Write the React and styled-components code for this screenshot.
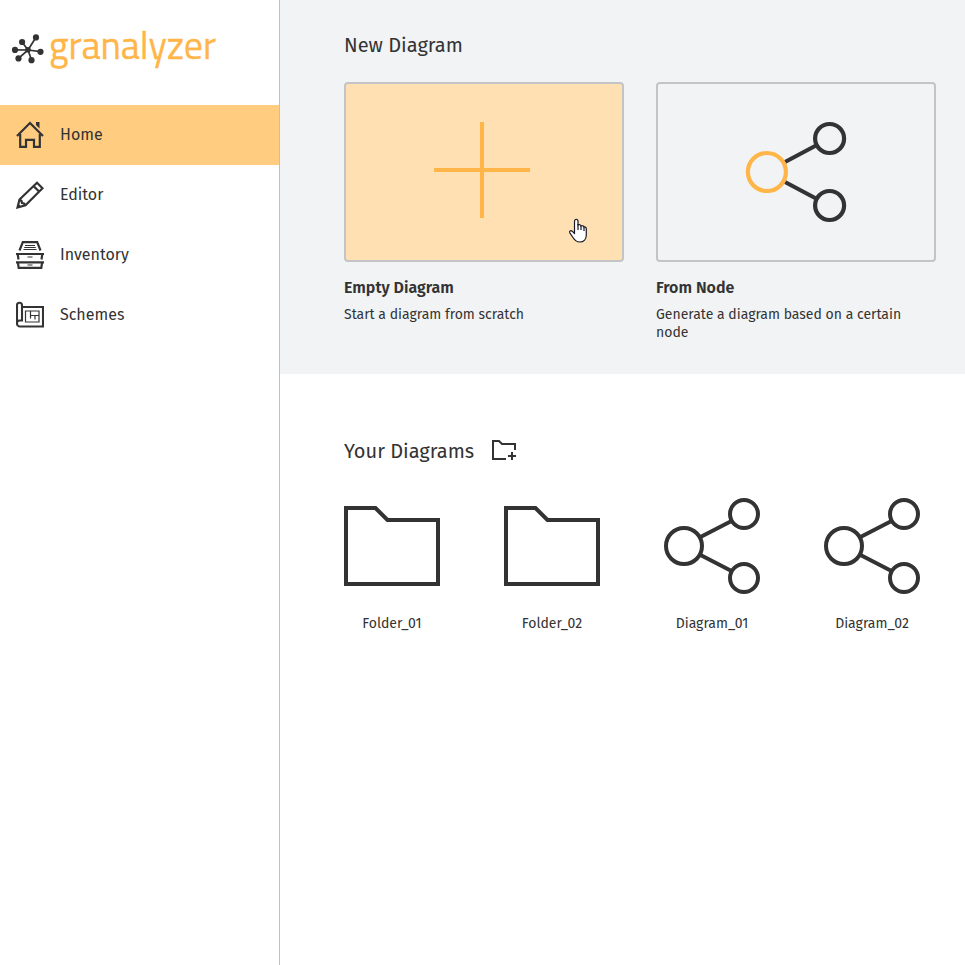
import React from "react";
import styled, { createGlobalStyle } from "styled-components";

const INK = "#333333";
const ORANGE = "#ffb547";

const GlobalStyle = createGlobalStyle`
  *, *::before, *::after { box-sizing: border-box; }
  html, body { margin: 0; padding: 0; overflow: hidden; }
  body { background: #fff; color: ${INK}; font-family: "Fira Sans", "Noto Sans", sans-serif; }
  svg { display: block; flex: none; }
`;

const Page = styled.div`
  display: flex;
  height: 100vh;
  width: 100%;
`;

const Sidebar = styled.aside`
  flex: none;
  width: 280px;
  border-right: 1px solid #bfc0c1;
`;

const Brand = styled.div`
  display: flex;
  align-items: flex-start;
  height: 105px;
  padding: 22px 0 0 11px;
  svg { margin-top: 11px; }
`;

const BrandName = styled.span`
  margin-left: 4px;
  color: ${ORANGE};
  font: 400 38px/46px "Titillium Web", "Noto Sans", sans-serif;
  letter-spacing: -0.08px;
  -webkit-text-stroke: 0.3px ${ORANGE};
`;

const NavItem = styled.a`
  display: flex;
  align-items: center;
  height: 60px;
  padding-left: 16px;
  gap: 16px;
  background: ${(p) => (p.$active ? "#ffcc80" : "transparent")};
`;

const NavLabel = styled.span`
  font-size: 16px;
  line-height: 20px;
`;

const Main = styled.main`
  flex: 1;
  min-width: 0;
`;

const NewSection = styled.section`
  height: 374px;
  padding: 32px 0 0 64px;
  background: #f2f3f5;
`;

const Title = styled.h2`
  margin: 0;
  font-size: 20px;
  line-height: 26px;
  font-weight: 400;
`;

const CardRow = styled.div`
  display: flex;
  gap: 32px;
  margin-top: 24px;
`;

const Card = styled.div`
  width: 280px;
`;

const Preview = styled.div`
  position: relative;
  height: 180px;
  border: 2px solid #c3c4c5;
  border-radius: 4px;
  background: ${(p) => (p.$highlighted ? "#ffe0b3" : "transparent")};
`;

const CardTitle = styled.h3`
  margin: 16px 0 0;
  font-size: 16px;
  line-height: 20px;
  font-weight: 600;
`;

const CardText = styled.p`
  margin: 8px 0 0;
  font-size: 14px;
  line-height: 18px;
`;

const Pointer = styled.svg`
  position: absolute;
  left: 222px;
  top: 134px;
`;

const OwnSection = styled.section`
  padding: 64px 0 0 64px;
`;

const TitleRow = styled.div`
  display: flex;
  align-items: center;
  justify-content: space-between;
  width: 173px;
  height: 26px;
`;

const FileGrid = styled.div`
  display: grid;
  grid-template-columns: repeat(4, 96px);
  column-gap: 64px;
  margin-top: 34px;
`;

const FileItem = styled.div`
  display: flex;
  flex-direction: column;
  align-items: center;
  gap: 20px;
`;

const FileName = styled.span`
  font-size: 14px;
  line-height: 20px;
  white-space: nowrap;
`;

const LogoMark = () => (
  <svg width="34" height="34" viewBox="11 33 34 34" stroke={INK} fill={INK} strokeWidth="1.7">
    <path d="M28 50 36 37.300M28 50 22 42M28 50 15 49.800M28 50 18.500 58.300M28 50 31.500 60M28 50 40.500 51.700" />
    <g stroke="none">
      <circle cx="28" cy="49.800" r="2.800" />
      <circle cx="36" cy="37.400" r="3.100" />
      <circle cx="22.100" cy="42" r="3.100" />
      <circle cx="15" cy="49.900" r="3.100" />
      <circle cx="18.500" cy="58.400" r="3.100" />
      <circle cx="31.500" cy="60.200" r="3.100" />
      <circle cx="40.500" cy="51.800" r="3.100" />
    </g>
  </svg>
);

const HomeIcon = () => (
  <svg width="28" height="28" viewBox="0 0 28 28" fill="none" stroke={INK} strokeWidth="2.200">
    <path d="M1 15 14 2l13 13" />
    <path d="M4.200 13v12.800h5.800v-7h8v7h5.800V13" />
    <path d="M20 1h3.500v6.500L20 4z" fill={INK} stroke="none" />
  </svg>
);

const PencilIcon = () => (
  <svg width="28" height="28" viewBox="0 0 28 28" fill="none" stroke={INK} strokeWidth="2.200">
    <path d="m1.500 26.500 2-8L21 1.700l5.500 5.500L9.500 24.300z" />
    <path d="m17.500 5 5.500 5.500M3.500 18.500l2 1.500.500 2 2 .500 1.500 2" />
    <path d="m1 27 1.200-4.500 3.300 3.300z" fill={INK} stroke="none" />
  </svg>
);

const InventoryIcon = () => (
  <svg width="28" height="28" viewBox="0 0 28 28" fill="none" stroke={INK}>
    <path d="M3.500 9.500 6.800 1.100h14.400l3.300 8.400" strokeWidth="2.200" />
    <path d="M9 4.500h10M8.200 6.500h11.600M7.500 8.500h13" strokeWidth="1" />
    <path d="M0 13h28M0 21.300h28" strokeWidth="2.200" />
    <path d="m1.700 13 .8 5.500M26.300 13l-.8 5.500" strokeWidth="2.200" />
    <path d="m1.900 21.500.800 5.400h22.600l.800-5.400" strokeWidth="2.200" />
    <path d="M11.500 16h5M11.500 24h5" strokeWidth="1.200" />
  </svg>
);

const SchemesIcon = () => (
  <svg width="28" height="28" viewBox="0 0 28 28" fill="none" stroke={INK} strokeWidth="2.100">
    <path d="M6 6h21v19.500H4a3 3 0 0 1-3-3V4.200a2.500 2.500 0 0 1 5 0v15.300H3.500A2.500 2.500 0 0 0 1 22" />
    <g strokeWidth="1.200">
      <path d="M9.500 10h13.500v11h-13.500z" />
      <path d="M14.500 10v7.500M14.500 14.500H23M19 14.500v4" />
    </g>
  </svg>
);

const PlusArt = () => (
  <svg width="276" height="176" viewBox="0 0 276 176" stroke={ORANGE} strokeWidth="4">
    <path d="M88 86h96M136 38v96" />
  </svg>
);

const NodeArt = () => (
  <svg width="276" height="176" viewBox="658 84 276 176" fill="none" stroke={INK} strokeWidth="4.200">
    <path d="m785 162 31-16.500M785 182l31 16.500" />
    <circle cx="829.600" cy="138.500" r="14.500" />
    <circle cx="829.600" cy="205.500" r="14.500" />
    <circle cx="766.900" cy="172" r="19" stroke={ORANGE} />
  </svg>
);

const PointerHand = () => (
  <Pointer width="20" height="26" viewBox="0 0 20 26" fill="#fff" stroke="#171725" strokeWidth="1.200" strokeLinejoin="round">
    <path d="M6.500 15.500V3.500C6.500.500 10 .500 10 3.500V7c1.200-.600 2.700-.300 3 1 1.200-.500 2.600-.200 3 1 1.300-.300 2.300.500 2.300 2v6c0 4-2.500 7-6.500 7-3.300 0-5-1.500-6.800-4.500L1.800 14.800c-.800-1.700 1-2.800 2.400-1.600z" />
    <path d="M10 6v6M13 8v4M16 9v4" />
  </Pointer>
);

const AddFolderIcon = () => (
  <svg width="26" height="24" viewBox="491 439 26 24" fill="none" stroke={INK} strokeWidth="2">
    <path d="M506 459h-13v-18h6l3 3h13v6M512 452v8M508 456h8" />
  </svg>
);

const FolderArt = () => (
  <svg width="96" height="96" viewBox="0 0 96 96" fill="none" stroke={INK} strokeWidth="4">
    <path d="M2 10h29.500l12 12H94v64H2z" />
  </svg>
);

const DiagramArt = () => (
  <svg width="96" height="96" viewBox="0 0 96 96" fill="none" stroke={INK} strokeWidth="4">
    <circle cx="20" cy="48" r="18" />
    <circle cx="80" cy="16" r="14" />
    <circle cx="80" cy="80" r="14" />
    <path d="m36.500 39 31-16M36.500 57l31 16" />
  </svg>
);

const navigation = [
  { label: "Home", Icon: HomeIcon, active: true },
  { label: "Editor", Icon: PencilIcon },
  { label: "Inventory", Icon: InventoryIcon },
  { label: "Schemes", Icon: SchemesIcon },
];

const files = [
  { name: "Folder_01", Art: FolderArt },
  { name: "Folder_02", Art: FolderArt },
  { name: "Diagram_01", Art: DiagramArt },
  { name: "Diagram_02", Art: DiagramArt },
];

export default function App() {
  return (
    <>
      <GlobalStyle />
      <Page>
        <Sidebar>
          <Brand>
            <LogoMark />
            <BrandName>granalyzer</BrandName>
          </Brand>
          <nav>
            {navigation.map(({ label, Icon, active }) => (
              <NavItem key={label} $active={active}>
                <Icon />
                <NavLabel>{label}</NavLabel>
              </NavItem>
            ))}
          </nav>
        </Sidebar>
        <Main>
          <NewSection>
            <Title>New Diagram</Title>
            <CardRow>
              <Card>
                <Preview $highlighted>
                  <PlusArt />
                  <PointerHand />
                </Preview>
                <CardTitle>Empty Diagram</CardTitle>
                <CardText>Start a diagram from scratch</CardText>
              </Card>
              <Card>
                <Preview>
                  <NodeArt />
                </Preview>
                <CardTitle>From Node</CardTitle>
                <CardText>Generate a diagram based on a certain node</CardText>
              </Card>
            </CardRow>
          </NewSection>
          <OwnSection>
            <TitleRow>
              <Title>Your Diagrams</Title>
              <AddFolderIcon />
            </TitleRow>
            <FileGrid>
              {files.map(({ name, Art }) => (
                <FileItem key={name}>
                  <Art />
                  <FileName>{name}</FileName>
                </FileItem>
              ))}
            </FileGrid>
          </OwnSection>
        </Main>
      </Page>
    </>
  );
}
